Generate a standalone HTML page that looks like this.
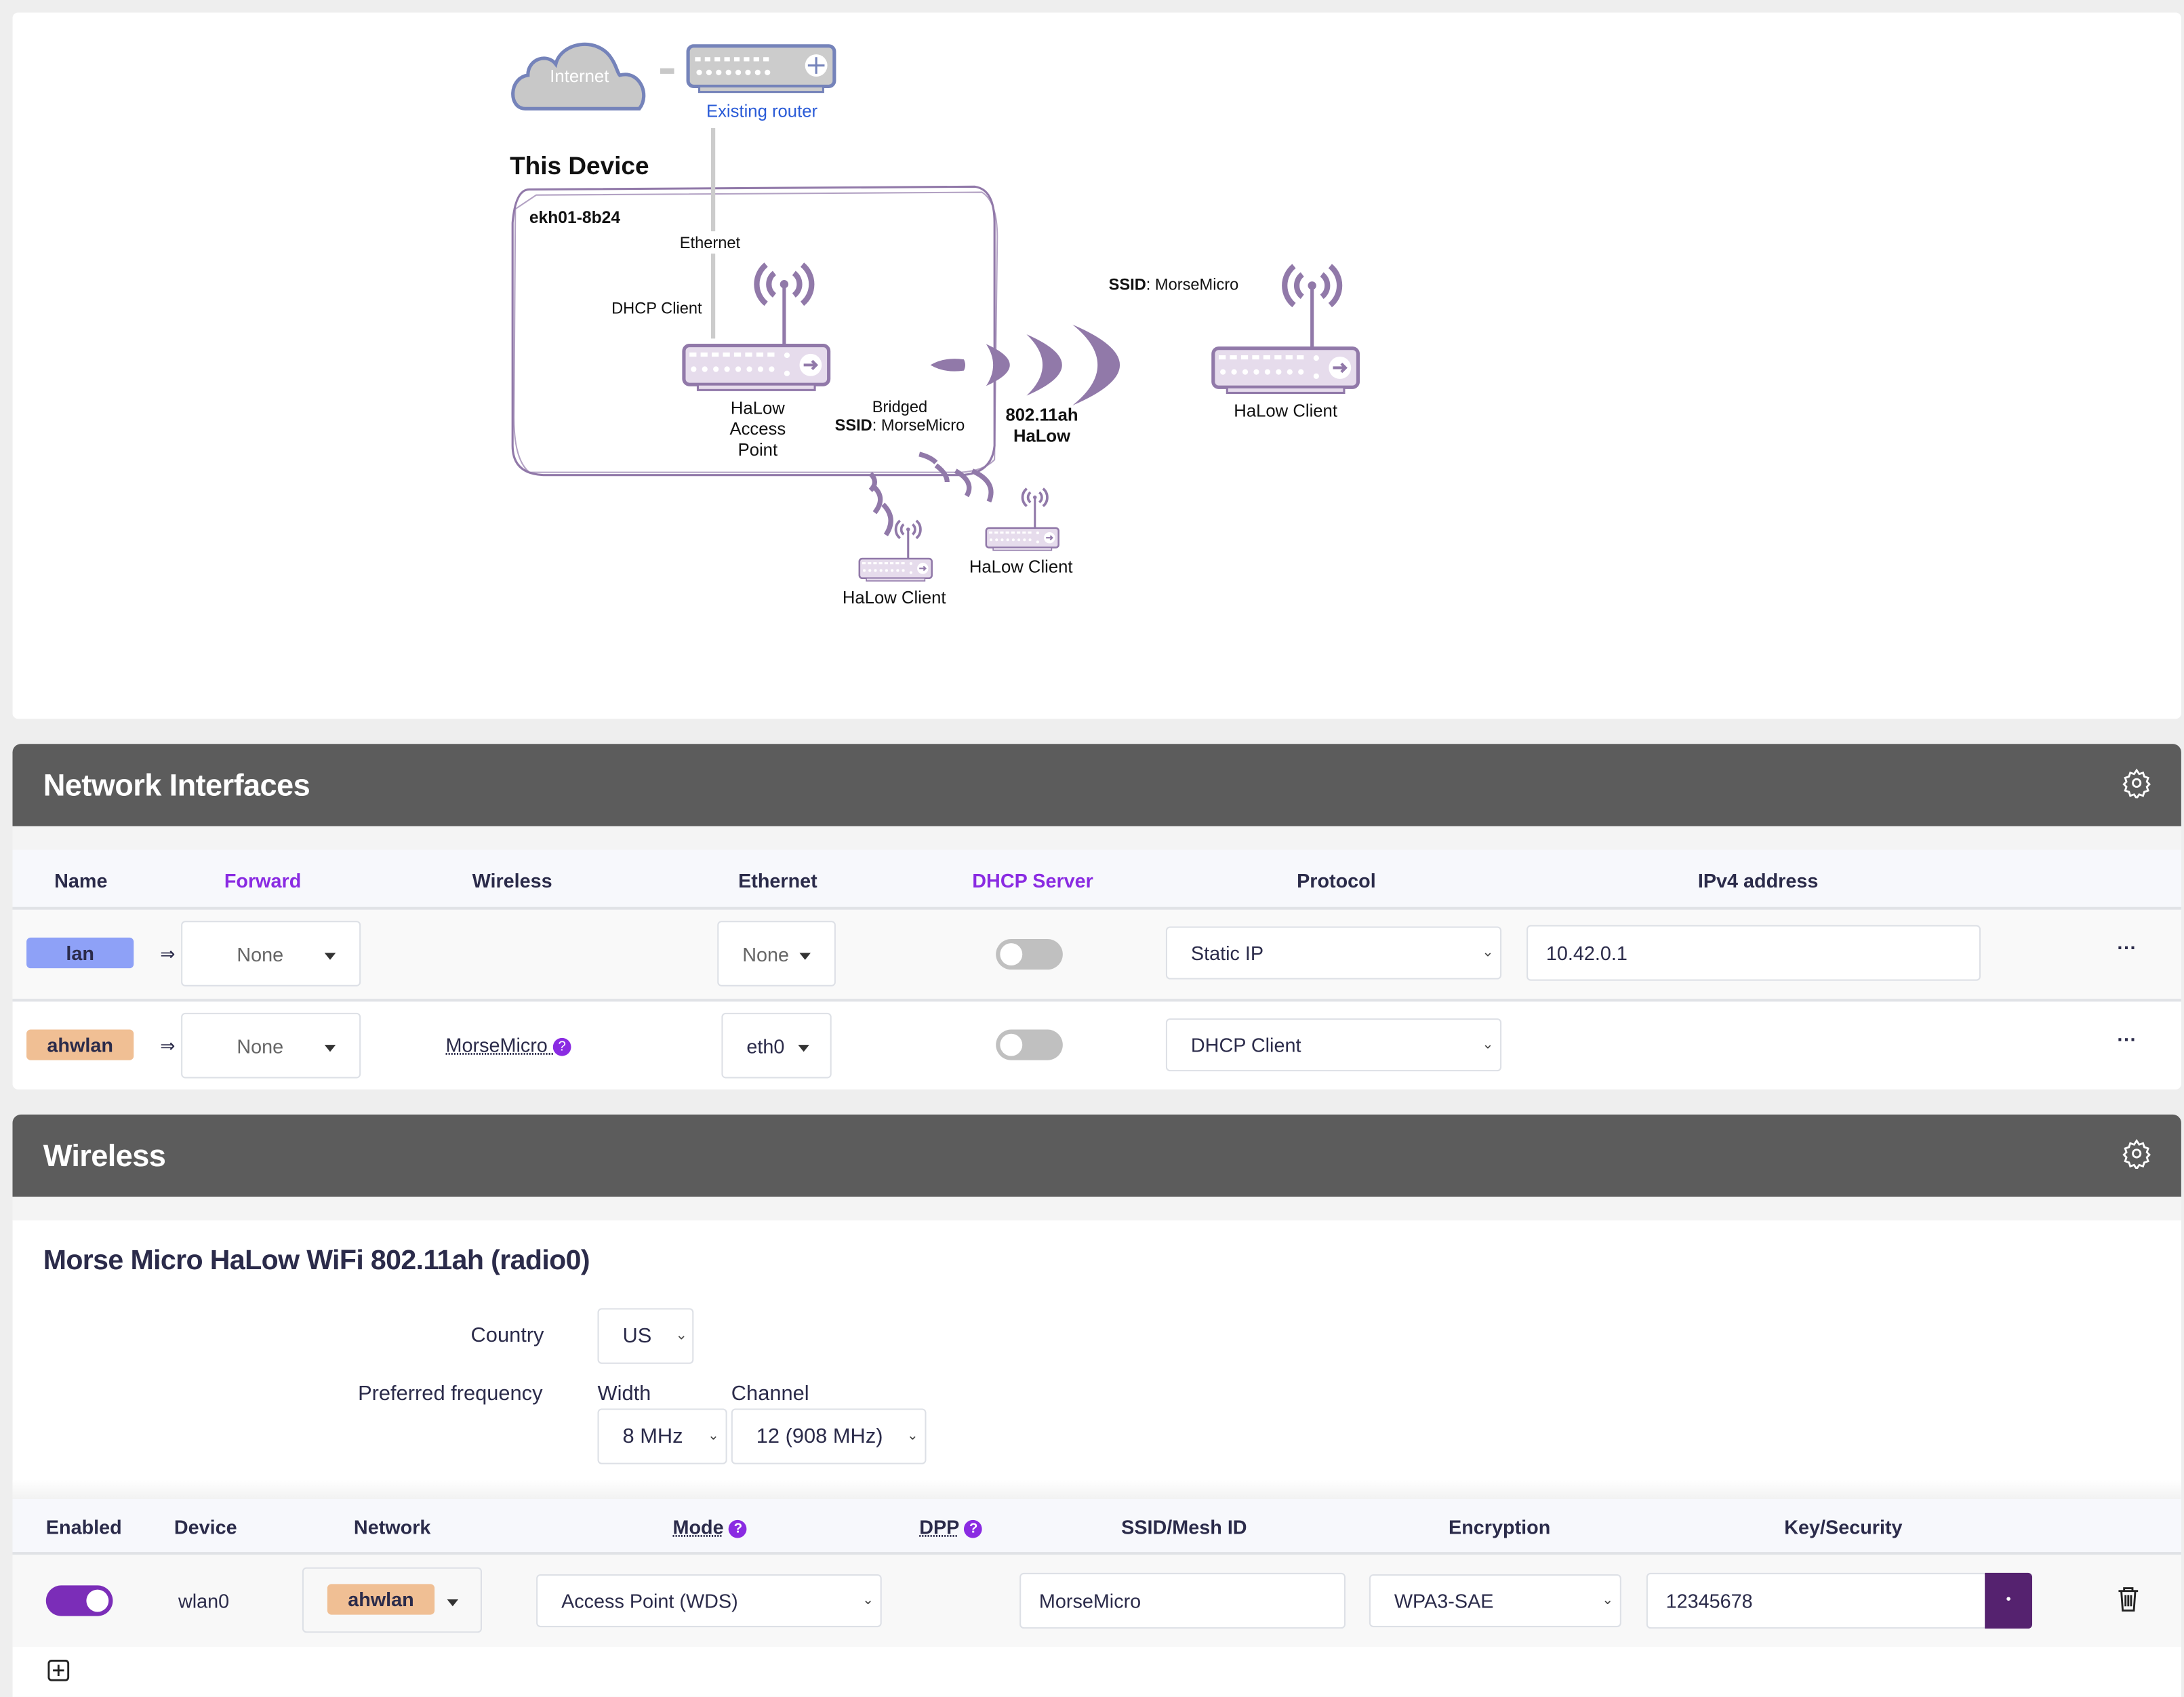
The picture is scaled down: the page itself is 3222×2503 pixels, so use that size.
<!DOCTYPE html>
<html><head><meta charset="utf-8">
<style>
html,body{margin:0;padding:0;background:#eeeeee;overflow:hidden}
body{width:3222px;height:2502px}
#w{position:absolute;left:0;top:0;width:1568px;height:1218px;transform:scale(2.05485);transform-origin:0 0;font-family:"Liberation Sans",sans-serif;color:#2b2b4a}
.a{position:absolute}
.card{position:absolute;background:#fff;left:9px;width:1557px}
.hdr{position:absolute;left:9px;width:1557px;height:59px;background:#5c5c5c;border-radius:6px 6px 0 0;color:#fff;font-weight:bold;font-size:22px}
.hdr span{position:absolute;left:22px;top:17px;letter-spacing:-0.3px}
.th{position:absolute;font-size:14px;font-weight:bold;color:#2b2b4a}
.pu{color:#8a2be2}
.box{position:absolute;background:#fff;border:1px solid #dde0e6;border-radius:3px;font-size:14px;color:#2b2b4a;box-sizing:border-box}
.box span{position:absolute;top:50%;transform:translateY(-50%)}
.chev{position:absolute;top:50%;transform:translateY(-60%);font-size:10px;color:#444}
.tri{position:absolute;top:50%;width:0;height:0;border-left:4px solid transparent;border-right:4px solid transparent;border-top:5px solid #333}
.tag{position:absolute;border-radius:3px;font-size:14px;font-weight:bold;text-align:center;line-height:22px;color:#2b2b4a}
.tog{position:absolute;width:48px;height:22px;border-radius:11px;background:#c0c0c0}
.tog i{position:absolute;left:3px;top:3px;width:16px;height:16px;border-radius:50%;background:#fff}
.q{display:inline-block;width:13px;height:13px;border-radius:50%;background:#8a2be2;color:#fff;font-size:10px;line-height:13px;text-align:center;vertical-align:1px}
.lbl{position:absolute;font-size:15px;color:#2b2b4a}
</style></head><body><div id="w">
<div class="card" style="top:9px;height:507px;border-radius:4px"></div>
<svg class="a" style="left:0;top:0" width="1568" height="520" viewBox="0 0 1568 520" font-family="Liberation Sans, sans-serif">
 <defs>
  <g id="rt">
   <rect x="0" y="0" width="104" height="28" rx="4" fill="#e6dcec" stroke="#9179a9" stroke-width="2.5"/>
   <rect x="10" y="28" width="84" height="4" fill="#e6dcec" stroke="#9179a9" stroke-width="1.5"/>
   <g fill="#fff"><rect x="4" y="5" width="5" height="3"/><rect x="12" y="5" width="5" height="3"/><rect x="20" y="5" width="5" height="3"/><rect x="28" y="5" width="5" height="3"/><rect x="36" y="5" width="5" height="3"/><rect x="44" y="5" width="5" height="3"/><rect x="52" y="5" width="5" height="3"/><rect x="60" y="5" width="5" height="3"/>
   <circle cx="7" cy="17" r="2"/><circle cx="15" cy="17" r="2"/><circle cx="23" cy="17" r="2"/><circle cx="31" cy="17" r="2"/><circle cx="39" cy="17" r="2"/><circle cx="47" cy="17" r="2"/><circle cx="55" cy="17" r="2"/><circle cx="63" cy="17" r="2"/><circle cx="74" cy="7" r="2"/><circle cx="74" cy="20" r="2"/><circle cx="91" cy="14" r="8"/></g>
   <path d="M86 14h9m-3-3 3 3-3 3" stroke="#9179a9" stroke-width="2" fill="none"/>
  </g>
  <g id="ant" fill="none" stroke="#9179a9" stroke-width="4">
   <path d="M-7 -8a10 10 0 0 0 0 16M7 -8a10 10 0 0 1 0 16M-13 -14a18 18 0 0 0 0 28M13 -14a18 18 0 0 1 0 28"/>
   <circle cx="0" cy="0" r="3" fill="#9179a9" stroke="none"/>
  </g>
 </defs>
 <path d="M377 78c-12 0-12-22 2-24 0-12 14-16 20-8 4-16 30-20 40-4 4 6 4 10 6 12 14-4 22 14 14 24z" fill="#c8c8c8" stroke="#7583ba" stroke-width="2.5"/>
 <text x="416" y="59" fill="#fff" font-size="12.5" text-anchor="middle">Internet</text>
 <rect x="474" y="49" width="10" height="4" fill="#c8c8c8"/>
 <g transform="translate(494,33)">
  <rect x="0" y="0" width="105" height="29" rx="4" fill="#ccc" stroke="#7583ba" stroke-width="2.5"/>
  <rect x="8" y="29" width="89" height="4" fill="#ccc" stroke="#7583ba" stroke-width="1.5"/>
  <g fill="#fff"><circle cx="8" cy="19" r="2"/><circle cx="15" cy="19" r="2"/><circle cx="22" cy="19" r="2"/><circle cx="29" cy="19" r="2"/><circle cx="36" cy="19" r="2"/><circle cx="43" cy="19" r="2"/><circle cx="50" cy="19" r="2"/><circle cx="57" cy="19" r="2"/><rect x="5" y="8" width="4" height="3"/><rect x="12" y="8" width="4" height="3"/><rect x="19" y="8" width="4" height="3"/><rect x="26" y="8" width="4" height="3"/><rect x="33" y="8" width="4" height="3"/><rect x="40" y="8" width="4" height="3"/><rect x="47" y="8" width="4" height="3"/><rect x="54" y="8" width="4" height="3"/><circle cx="92" cy="14" r="8"/></g>
  <path d="M92 8v12M86 14h12" stroke="#7583ba" stroke-width="1.5"/>
 </g>
 <text x="547" y="84" fill="#2a5bd7" font-size="12.5" text-anchor="middle">Existing router</text>
 <text x="366" y="125" fill="#111" font-size="18" font-weight="bold">This Device</text>
 <path d="M380 136 L700 134 Q714 136 714 160 L714 320 Q712 340 690 341 L390 341 Q368 340 368 320 L368 160 Q370 136 380 136Z" fill="none" stroke="#9179a9" stroke-width="1.5"/>
 <path d="M385 140 L705 138 Q716 145 716 170 L714 330 Q706 338 690 339 L380 339 Q369 330 369 300 L370 150Z" fill="none" stroke="#9179a9" stroke-width="1" opacity=".7"/>
 <line x1="512" y1="92" x2="512" y2="166" stroke="#ccc" stroke-width="3"/>
 <line x1="512" y1="182" x2="512" y2="243" stroke="#ccc" stroke-width="3"/>
 <text x="380" y="160" fill="#111" font-size="12" font-weight="bold">ekh01-8b24</text>
 <text x="488" y="178" fill="#111" font-size="11.5">Ethernet</text>
 <text x="439" y="225" fill="#111" font-size="11.5">DHCP Client</text>
 <line x1="563" y1="204" x2="563" y2="248" stroke="#9179a9" stroke-width="2.5"/>
 <use href="#ant" transform="translate(563,204)"/>
 <use href="#rt" transform="translate(491,248)"/>
 <text font-size="12.5" fill="#111" text-anchor="middle"><tspan x="544" y="297">HaLow</tspan><tspan x="544" y="312">Access</tspan><tspan x="544" y="327">Point</tspan></text>
 <text font-size="11.5" fill="#111" text-anchor="middle"><tspan x="646" y="296">Bridged</tspan><tspan x="646" y="309"><tspan font-weight="bold">SSID</tspan>: MorseMicro</tspan></text>
 <g fill="#9179a9">
  <path d="M668 262q10-6 24-4 2 4 0 8-14 2-24-4z"/>
  <path d="M708 247Q742 262 708 277Q718 262 708 247z"/>
  <path d="M737 240Q788 262 737 284Q760 262 737 240z"/>
  <path d="M770 233Q838 262 770 291Q806 262 770 233z"/>
 </g>
 <g stroke="#9179a9" stroke-width="3.5" fill="none">
  <path d="M625 340q6 6 0 12M628 350q8 8 0 18M634 362q10 10 2 22"/>
  <path d="M660 326q8 2 12 6M672 334q8 6 8 12M686 338q14 8 8 18M698 338q18 8 12 22"/>
 </g>
 <text font-size="12.5" fill="#111" text-anchor="middle" font-weight="bold"><tspan x="748" y="302">802.11ah</tspan><tspan x="748" y="317">HaLow</tspan></text>
 <text x="796" y="208" fill="#111" font-size="11.5"><tspan font-weight="bold">SSID</tspan>: MorseMicro</text>
 <line x1="942" y1="206" x2="942" y2="251" stroke="#9179a9" stroke-width="2.5"/>
 <use href="#ant" transform="translate(942,205)"/>
 <use href="#rt" transform="translate(871,250)"/>
 <text x="923" y="299" fill="#111" font-size="12.5" text-anchor="middle">HaLow Client</text>
 <line x1="652" y1="380" x2="652" y2="402" stroke="#9179a9" stroke-width="1.5"/>
 <use href="#ant" transform="translate(652,380) scale(.45)"/>
 <use href="#rt" transform="translate(617,401) scale(.5)"/>
 <text x="642" y="433" fill="#111" font-size="12.5" text-anchor="middle">HaLow Client</text>
 <line x1="743" y1="357" x2="743" y2="380" stroke="#9179a9" stroke-width="1.5"/>
 <use href="#ant" transform="translate(743,357) scale(.45)"/>
 <use href="#rt" transform="translate(708,379) scale(.5)"/>
 <text x="733" y="411" fill="#111" font-size="12.5" text-anchor="middle">HaLow Client</text>
</svg>

<div class="hdr" style="top:534px"><span>Network Interfaces</span></div>
<svg class="a" style="left:1523px;top:551px" width="22" height="22" viewBox="0 0 24 24" fill="none" stroke="#fff" stroke-width="1.5"><circle cx="12" cy="12" r="3"/><path d="M12 2l2 3 3-1 1 3 3 1-1 3 2 2-2 2 1 3-3 1-1 3-3-1-2 3-2-3-3 1-1-3-3-1 1-3-2-2 2-2-1-3 3-1 1-3 3 1z"/></svg>
<div class="card" style="top:593px;height:18px;background:#f4f4f4"></div>
<div class="card" style="top:610px;height:41px;background:#f7f8fc;border-bottom:2px solid #e0e2e6"></div>
<div class="th" style="left:39px;top:624px">Name</div>
<div class="th pu" style="left:161px;top:624px">Forward</div>
<div class="th" style="left:339px;top:624px">Wireless</div>
<div class="th" style="left:530px;top:624px">Ethernet</div>
<div class="th pu" style="left:698px;top:624px">DHCP Server</div>
<div class="th" style="left:931px;top:624px">Protocol</div>
<div class="th" style="left:1219px;top:624px">IPv4 address</div>
<div class="card" style="top:653px;height:64px;background:#f9f9f9;border-bottom:2px solid #e0e2e6"></div>
<div class="card" style="top:719px;height:63px;border-radius:0 0 4px 4px"></div>
<div class="tag" style="left:19px;top:673px;width:77px;background:#8ea1f7">lan</div>
<div class="a" style="left:115px;top:677px;font-size:13px">⇒</div>
<div class="box" style="left:130px;top:661px;width:129px;height:47px;color:#666"><span style="left:39px">None</span><div class="tri" style="left:102px;margin-top:-1px"></div></div>
<div class="box" style="left:515px;top:661px;width:85px;height:47px;color:#666"><span style="left:17px">None</span><div class="tri" style="left:58px;margin-top:-1px"></div></div>
<div class="tog" style="left:715px;top:674px"><i></i></div>
<div class="box" style="left:837px;top:665px;width:241px;height:38px"><span style="left:17px">Static IP</span><span class="chev" style="left:226px">&#8964;</span></div>
<div class="box" style="left:1096px;top:664px;width:326px;height:40px"><span style="left:13px">10.42.0.1</span></div>
<div class="a" style="left:1520px;top:672px;font-size:14px;font-weight:bold">···</div>
<div class="tag" style="left:19px;top:739px;width:77px;background:#f0bf94">ahwlan</div>
<div class="a" style="left:115px;top:743px;font-size:13px">⇒</div>
<div class="box" style="left:130px;top:727px;width:129px;height:47px;color:#666"><span style="left:39px">None</span><div class="tri" style="left:102px;margin-top:-1px"></div></div>
<div class="a" style="left:320px;top:742px;font-size:14px;text-decoration:underline dotted">MorseMicro <span class="q" style="text-decoration:none">?</span></div>
<div class="box" style="left:518px;top:727px;width:79px;height:47px"><span style="left:17px">eth0</span><div class="tri" style="left:54px;margin-top:-1px"></div></div>
<div class="tog" style="left:715px;top:739px"><i></i></div>
<div class="box" style="left:837px;top:731px;width:241px;height:38px"><span style="left:17px">DHCP Client</span><span class="chev" style="left:226px">&#8964;</span></div>
<div class="a" style="left:1520px;top:738px;font-size:14px;font-weight:bold">···</div>

<div class="hdr" style="top:800px"><span>Wireless</span></div>
<svg class="a" style="left:1523px;top:817px" width="22" height="22" viewBox="0 0 24 24" fill="none" stroke="#fff" stroke-width="1.5"><circle cx="12" cy="12" r="3"/><path d="M12 2l2 3 3-1 1 3 3 1-1 3 2 2-2 2 1 3-3 1-1 3-3-1-2 3-2-3-3 1-1-3-3-1 1-3-2-2 2-2-1-3 3-1 1-3 3 1z"/></svg>
<div class="card" style="top:859px;height:18px;background:#f4f4f4"></div>
<div class="card" style="top:876px;height:200px"></div>
<div class="a" style="left:31px;top:894px;font-size:20px;font-weight:bold;color:#2b2b4a;letter-spacing:-0.3px">Morse Micro HaLow WiFi 802.11ah (radio0)</div>
<div class="lbl" style="left:338px;top:950px">Country</div>
<div class="box" style="left:429px;top:939px;width:69px;height:40px"><span style="left:17px;font-size:15px">US</span><span class="chev" style="left:55px">&#8964;</span></div>
<div class="lbl" style="left:257px;top:992px">Preferred frequency</div>
<div class="lbl" style="left:429px;top:992px">Width</div>
<div class="lbl" style="left:525px;top:992px">Channel</div>
<div class="box" style="left:429px;top:1011px;width:93px;height:40px"><span style="left:17px;font-size:15px">8 MHz</span><span class="chev" style="left:78px">&#8964;</span></div>
<div class="box" style="left:525px;top:1011px;width:140px;height:40px"><span style="left:17px;font-size:15px">12 (908 MHz)</span><span class="chev" style="left:125px">&#8964;</span></div>
<div class="card" style="top:1062px;height:14px;background:linear-gradient(#fff,#f2f2f2)"></div>
<div class="card" style="top:1076px;height:38px;background:#f7f8fc;border-bottom:2px solid #e0e2e6"></div>
<div class="th" style="left:33px;top:1088px">Enabled</div>
<div class="th" style="left:125px;top:1088px">Device</div>
<div class="th" style="left:254px;top:1088px">Network</div>
<div class="th" style="left:483px;top:1088px"><u style="text-decoration:underline dotted">Mode</u> <span class="q">?</span></div>
<div class="th" style="left:660px;top:1088px"><u style="text-decoration:underline dotted">DPP</u> <span class="q">?</span></div>
<div class="th" style="left:805px;top:1088px">SSID/Mesh ID</div>
<div class="th" style="left:1040px;top:1088px">Encryption</div>
<div class="th" style="left:1281px;top:1088px">Key/Security</div>
<div class="card" style="top:1116px;height:66px;background:#f8f8f8"></div>
<div class="card" style="top:1182px;height:36px"></div>
<div class="tog" style="left:33px;top:1138px;background:#7b2db8"><i style="left:29px"></i></div>
<div class="a" style="left:128px;top:1141px;font-size:14px">wlan0</div>
<div class="box" style="left:217px;top:1125px;width:129px;height:47px;background:#f8f8f8"><div class="tag" style="left:17px;top:11px;width:77px;background:#f0bf94">ahwlan</div><div class="tri" style="left:103px;margin-top:-1px"></div></div>
<div class="box" style="left:385px;top:1130px;width:248px;height:38px"><span style="left:17px">Access Point (WDS)</span><span class="chev" style="left:233px">&#8964;</span></div>
<div class="box" style="left:732px;top:1129px;width:234px;height:40px"><span style="left:13px">MorseMicro</span></div>
<div class="box" style="left:983px;top:1130px;width:181px;height:38px"><span style="left:17px">WPA3-SAE</span><span class="chev" style="left:166px">&#8964;</span></div>
<div class="box" style="left:1182px;top:1129px;width:245px;height:40px"><span style="left:13px">12345678</span></div>
<div class="a" style="left:1425px;top:1129px;width:34px;height:40px;background:#55226f;border-radius:0 3px 3px 0;color:#fff;font-size:10px;text-align:center;line-height:40px">•</div>
<svg class="a" style="left:1520px;top:1138px" width="16" height="19" viewBox="0 0 16 19" fill="none" stroke="#222" stroke-width="1.4"><path d="M1 4h14M5 4V2h6v2M3 4l1 14h8l1-14M6 7v8M8 7v8M10 7v8"/></svg>
<svg class="a" style="left:34px;top:1191px" width="16" height="16" viewBox="0 0 16 16" fill="none" stroke="#222" stroke-width="1.4"><rect x="1" y="1" width="14" height="14" rx="2"/><path d="M8 4v8M4 8h8"/></svg>
</div></body></html>
